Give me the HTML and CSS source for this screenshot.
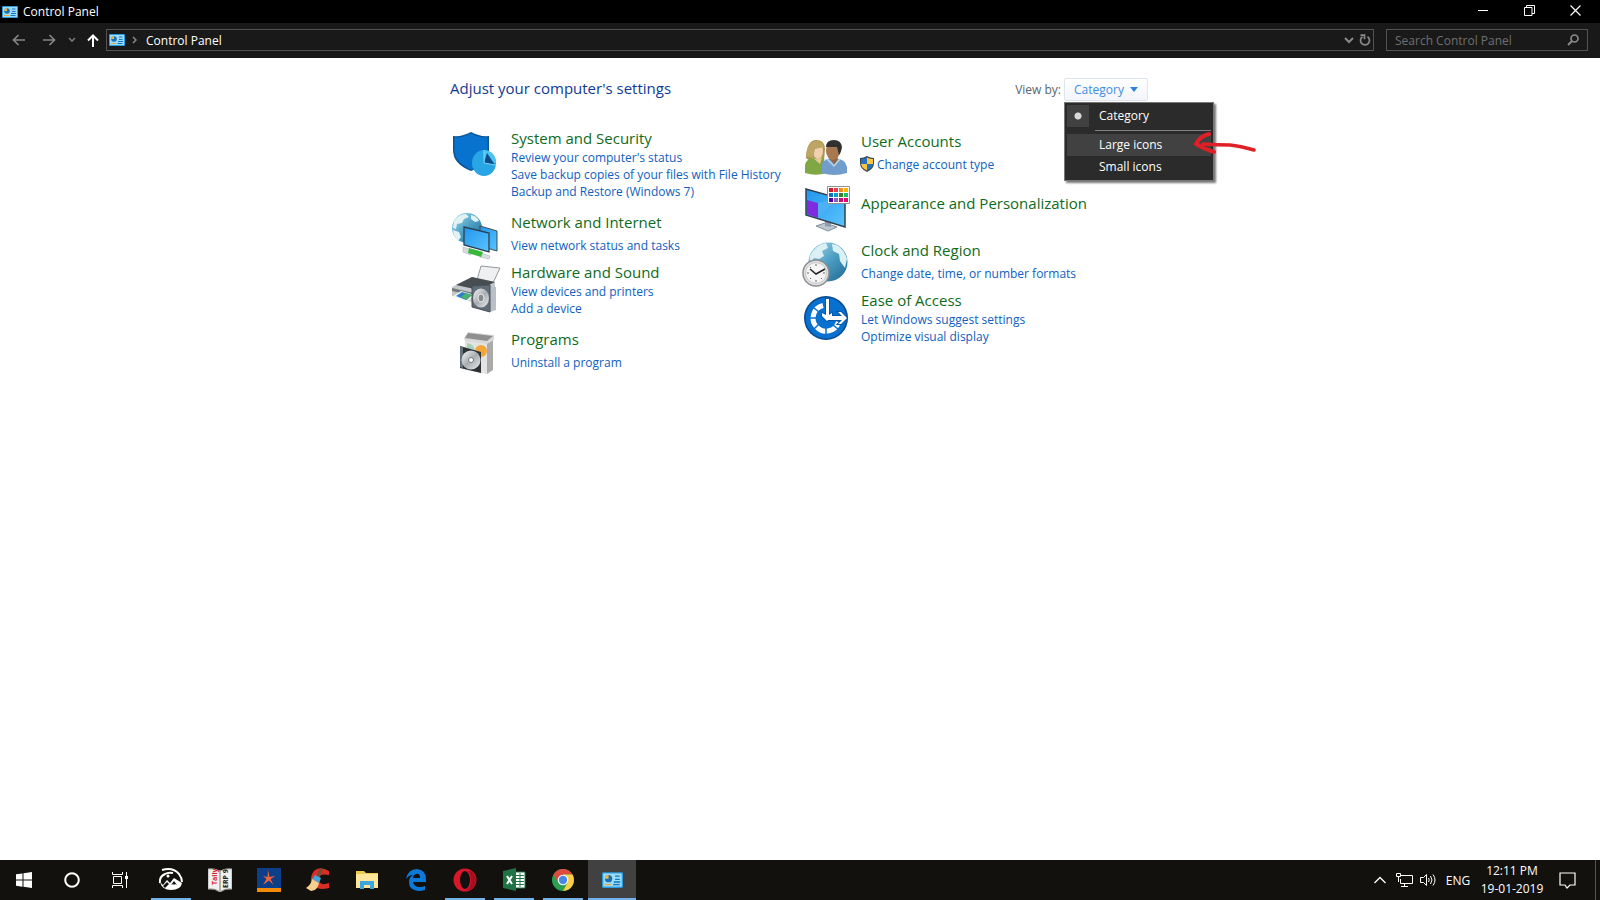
FILE: index.html
```html
<!DOCTYPE html>
<html lang="en">
  <head>
    <meta charset="UTF-8" />
    <meta name="viewport" content="width=device-width, initial-scale=1.0" />
    <title>Control Panel</title>
    <link rel="stylesheet" href="styles.css" />
  </head>
  <body>
    <!-- shared icons -->
    <svg class="defs" aria-hidden="true">
      <defs>
        <symbol id="cp" viewBox="0 0 16 12">
          <rect width="16" height="12" rx="1" fill="#2b9be0" />
          <rect x="1" y="1" width="14" height="10" fill="#9bdcfb" />
          <circle cx="5" cy="5" r="2.8" fill="#1a6fb5" />
          <path d="M5 5V2.200a2.800 2.800 0 0 0-2.800 2.800z" fill="#f6b53c" />
          <path d="M10 3h3.500M10 5.500h3.500M9 7.500h5" stroke="#1673bd" />
          <path d="M2 9.500h5" stroke="#e9a93a" />
          <path d="M8.500 9.500h5" stroke="#1673bd" />
        </symbol>
        <linearGradient id="globe" x1="0" y1="0" x2="1" y2="1">
          <stop offset="0" stop-color="#a9dcec" />
          <stop offset=".5" stop-color="#4d9fc4" />
          <stop offset="1" stop-color="#1d668f" />
        </linearGradient>
        <linearGradient id="screen" x1="0" y1="0" x2="1" y2="1">
          <stop offset="0" stop-color="#2196ee" />
          <stop offset="1" stop-color="#5cc4fc" />
        </linearGradient>
        <linearGradient id="metal" x1="0" y1="0" x2="1" y2="1">
          <stop offset="0" stop-color="#f8f8f8" />
          <stop offset=".5" stop-color="#a9adb1" />
          <stop offset="1" stop-color="#ececec" />
        </linearGradient>
      </defs>
    </svg>

    <div class="window">
      <header class="titlebar">
        <svg class="cp-icon"><use href="#cp" /></svg>
        <span class="title">Control Panel</span>
        <div class="window-buttons">
          <button type="button" aria-label="Minimize">
            <svg width="11" height="11"><path d="M0 5.500h10" stroke="#fff" /></svg>
          </button>
          <button type="button" aria-label="Restore">
            <svg width="11" height="11" fill="none" stroke="#fff"><path d="M.5 2.500h7.500v8H.5zM2.500 2.500v-2h8v8H8" /></svg>
          </button>
          <button type="button" aria-label="Close">
            <svg width="11" height="11"><path d="M.5.5l10 10m0-10l-10 10" stroke="#fff" stroke-width="1.200" /></svg>
          </button>
        </div>
      </header>

      <nav class="navbar">
        <button type="button" class="nav-btn" aria-label="Back">
          <svg width="14" height="12" fill="none" stroke="#858585" stroke-width="1.700"><path d="M13 6H1.500M6.500 1l-5 5 5 5" /></svg>
        </button>
        <button type="button" class="nav-btn" aria-label="Forward">
          <svg width="14" height="12" fill="none" stroke="#858585" stroke-width="1.700"><path d="M1 6h11.500M7.500 1l5 5-5 5" /></svg>
        </button>
        <button type="button" class="nav-btn small" aria-label="Recent locations">
          <svg width="8" height="6" fill="none" stroke="#777" stroke-width="1.700"><path d="M1 1l3 3 3-3" /></svg>
        </button>
        <button type="button" class="nav-btn up" aria-label="Up">
          <svg width="12" height="13" fill="none" stroke="#fff" stroke-width="2"><path d="M6 13V2M1 6.500l5-5 5 5" /></svg>
        </button>
        <div class="address">
          <svg class="cp-icon"><use href="#cp" /></svg>
          <svg class="crumb" width="5" height="8" fill="none" stroke="#8a8a8a" stroke-width="1.500"><path d="M1 1l3 3-3 3" /></svg>
          <a href="#">Control Panel</a>
          <button type="button" aria-label="Previous locations">
            <svg width="10" height="7" fill="none" stroke="#8a8a8a" stroke-width="2"><path d="M1 1l4 4 4-4" /></svg>
          </button>
          <button type="button" aria-label="Refresh">
            <svg width="12" height="12" fill="none" stroke="#8a8a8a" stroke-width="1.700"><path d="M3.500 2.700A4.500 4.500 0 1 0 8.500 2.700M1.500 1.200h4v4" /></svg>
          </button>
        </div>
        <form class="search">
          <input type="text" placeholder="Search Control Panel" aria-label="Search Control Panel" />
          <button type="submit" aria-label="Search">
            <svg width="12" height="12" fill="none" stroke="#8a8a8a"><circle cx="7.500" cy="4.500" r="3.500" stroke-width="1.700" /><path d="M5 7L1 11" stroke-width="2" /></svg>
          </button>
        </form>
      </nav>

      <main class="content">
        <div class="content-head">
          <h1>Adjust your computer's settings</h1>
          <div class="view-by">
            <span id="view-label">View by:</span>
            <div class="dropdown">
              <button type="button" class="dropdown-btn" aria-haspopup="menu" aria-expanded="true" aria-labelledby="view-label">
                Category
                <svg width="8" height="5"><path d="M0 0h8L4 5z" fill="#2c83dc" /></svg>
              </button>
              <div class="menu" role="menu">
                <button type="button" role="menuitemradio" aria-checked="true"><span class="mark"></span>Category</button>
                <hr />
                <button type="button" role="menuitemradio" aria-checked="false" class="hovered">Large icons</button>
                <button type="button" role="menuitemradio" aria-checked="false">Small icons</button>
                <svg class="pointer" width="62" height="24" fill="none" stroke="#e01f27" stroke-linecap="round" stroke-linejoin="round">
                  <path d="M15 2Q6 4 2 12q8 5 18 8" stroke-width="4" />
                  <path d="M9 12q14 1 27 1 10 1 24 5" stroke-width="3.500" />
                </svg>
              </div>
            </div>
          </div>
        </div>

        <div class="columns">
          <div class="column">
            <section class="item">
              <svg viewBox="0 0 48 48">
                <path d="M2 8Q11 9 20 4q9 5 18 4v14q0 14-18 21Q2 36 2 22z" fill="#0b5595" />
                <path d="M3.500 9.500Q12 10 20 5.500q8 4.500 16.500 4V22q0 12-16.500 19.500Q3.500 34 3.500 22z" fill="#0873ce" />
                <ellipse cx="33" cy="35" rx="12" ry="13" fill="#27a5e4" />
                <path d="M33 35V22a12 13 0 0 1 12 13z" fill="#4cc4f2" />
                <path d="M33 35l3-10 8 12z" fill="#0a4c8c" />
                <path d="M33 22v13l12 2" fill="none" stroke="#7cd8f7" />
              </svg>
              <div class="text">
                <h2><a href="#">System and Security</a></h2>
                <a href="#">Review your computer's status</a>
                <a href="#">Save backup copies of your files with File History</a>
                <a href="#">Backup and Restore (Windows 7)</a>
              </div>
            </section>
            <section class="item single">
              <svg viewBox="0 0 48 48">
                <circle cx="16" cy="16" r="15" fill="url(#globe)" />
                <path d="M3 9q5-7 12-7l3 3-5 2-2 4-5 1-1 5-3-1zM20 3q6 1 8 6l-4 1-4-3zM2 18l6 2 2 5-3 4Q2 24 2 18z" fill="#e1f2f5" />
                <path d="M29 14l17 5v20l-17-5z" fill="url(#screen)" stroke="#3d4b56" />
                <path d="M12 35l9 3-1 5-8-3zM30 41l9 3-1 3-9-2z" fill="#d7dcdd" stroke="#a2adb0" stroke-width=".5" />
                <path d="M18 36l14 4-2 5-13-4z" fill="#38b83c" />
                <path d="M13 15l25 6v19l-25-7z" fill="url(#screen)" stroke="#2a4256" stroke-width="1.300" />
              </svg>
              <div class="text">
                <h2><a href="#">Network and Internet</a></h2>
                <a href="#">View network status and tasks</a>
              </div>
            </section>
            <section class="item">
              <svg viewBox="0 0 48 48">
                <path d="M30 4l19 2-8 17-15-5z" fill="#eef0f1" stroke="#969a9d" />
                <path d="M1 25l20-10 23 5v11L24 41 1 34z" fill="#c5c9cc" />
                <path d="M5 23l16-8 23 5-16 8z" fill="#484d52" />
                <path d="M1 26l22 5v3L1 29zM2 34l12 4 9-2" fill="#73787c" />
                <path d="M1 35l9-6 14 4-8 7z" fill="#f4f7f8" />
                <path d="M5 34l6-4 10 3-6 5z" fill="#2e7fca" />
                <path d="M10 35l5-4 6 2-5 5z" fill="#4bb070" />
                <path d="M39 24l6 1v23l-6 2z" fill="#b9bfc5" />
                <path d="M21 24l18-1v27l-18-5z" fill="#626c77" stroke="#48515a" />
                <ellipse cx="30" cy="36" rx="8" ry="9.500" fill="url(#metal)" />
                <ellipse cx="30" cy="36" rx="3" ry="4" fill="#838a90" stroke="#eee" />
              </svg>
              <div class="text">
                <h2><a href="#">Hardware and Sound</a></h2>
                <a href="#">View devices and printers</a>
                <a href="#">Add a device</a>
              </div>
            </section>
            <section class="item single">
              <svg viewBox="0 0 48 48">
                <path d="M14 9l22 3v33l-22-4z" fill="#e4e4e4" />
                <path d="M36 12l6-3v32l-6 4z" fill="#aaa" />
                <path d="M13 9l4-6 26 3v5l-7 4-22-3z" fill="#d8d8d8" />
                <path d="M14 9l3-5 25 3-6 5z" fill="#8f8f8f" />
                <circle cx="30" cy="22" r="6" fill="#f5a638" />
                <path d="M16 14q8 1 8 9l-8-1z" fill="#a8d2b8" />
                <path d="M9 17l21 6v21L9 39z" fill="#2d3237" />
                <path d="M9 17l3 1v21l-3-1z" fill="#66717b" />
                <circle cx="20" cy="31" r="9.500" fill="url(#metal)" />
                <circle cx="20" cy="31" r="2.500" fill="#fff" stroke="#777" />
              </svg>
              <div class="text">
                <h2><a href="#">Programs</a></h2>
                <a href="#">Uninstall a program</a>
              </div>
            </section>
          </div>

          <div class="column right">
            <section class="item single">
              <svg viewBox="0 0 48 48">
                <path d="M5 27Q6 9 15 9t9 9l-1 12H9z" fill="#a99450" />
                <path d="M4 42V35q0-7 9-8l8-1 7 15q-11 5-24 1z" fill="#7fa844" />
                <ellipse cx="17" cy="20" rx="5" ry="8" fill="#f2cfad" />
                <path d="M5 25q1-16 12-15 6 1 6 6l-9 2-2 9z" fill="#bda564" />
                <path d="M12 27q6 3 9-1l-2 7z" fill="#eec5a0" />
                <path d="M21 42v-9q2-6 12-6 12 1 13 9v6q-13 4-25 0z" fill="#719dcc" />
                <path d="M28 27h9l-3 7z" fill="#946541" />
                <ellipse cx="32" cy="20" rx="7" ry="9" fill="#a87850" />
                <path d="M25 16q0-7 8-7 7 0 8 7-1 6-3 8l-2-8z" fill="#30302f" />
                <path d="M26 28l7 7 6-7" fill="none" stroke="#bad5ef" stroke-width="1.500" />
              </svg>
              <div class="text">
                <h2><a href="#">User Accounts</a></h2>
                <a href="#" class="shielded">
                  <svg class="uac" viewBox="0 0 14 16">
                    <path d="M7 0q3 2 7 2v5q0 6-7 9-7-3-7-9V2q4 0 7-2z" fill="#3c4650" />
                    <path d="M7 1.500V8H1V3q3 0 6-1.500zM7 8h6q-1 4.500-6 6.500z" fill="#2672be" />
                    <path d="M7 1.500V8h6V3q-3 0-6-1.500zM7 8H1q1 4.500 6 6.500z" fill="#fbc642" />
                  </svg>
                  Change account type
                </a>
              </div>
            </section>
            <section class="item bare">
              <svg viewBox="0 0 48 48">
                <path d="M15 43l9-3 12 4-9 4z" fill="#bdc7cf" stroke="#84919c" />
                <path d="M24 36h6v8l-6-1z" fill="#8d9dab" />
                <path d="M5 6l39 11v27L5 32z" fill="url(#screen)" stroke="#33424e" stroke-width="1.500" />
                <path d="M6 17l11 3v15L6 31z" fill="#7f2be0" />
                <path d="M17 20l20-4-20 19z" fill="#4cb1f6" />
                <path d="M26.500 3.500h22v17h-22z" fill="#fff" stroke="#909090" />
                <path d="M28 5h4v4h-4z" fill="#d21a2d" /><path d="M33 5h4v4h-4z" fill="#ed3d42" /><path d="M38 5h4v4h-4z" fill="#f08a24" /><path d="M43 5h4v4h-4z" fill="#fbb500" />
                <path d="M28 10h4v4h-4z" fill="#1670bd" /><path d="M33 10h4v4h-4z" fill="#079fc3" /><path d="M38 10h4v4h-4z" fill="#3a812b" /><path d="M43 10h4v4h-4z" fill="#19bd6a" />
                <path d="M28 15h4v4h-4z" fill="#5200a5" /><path d="M33 15h4v4h-4z" fill="#8760ba" /><path d="M38 15h4v4h-4z" fill="#c71283" /><path d="M43 15h4v4h-4z" fill="#e30b67" />
              </svg>
              <div class="text">
                <h2><a href="#">Appearance and Personalization</a></h2>
              </div>
            </section>
            <section class="item single">
              <svg viewBox="0 0 48 48">
                <circle cx="27" cy="22" r="19.500" fill="url(#globe)" />
                <path d="M9 16Q14 5 25 3l2 5-6 3 2 5-5 3-5-1-4 6zM31 4q11 1 15 15l-2 9-5-7-1-7-6-3z" fill="#daf0f4" />
                <circle cx="15" cy="33" r="13" fill="#e2e4e6" stroke="#8b8d90" stroke-width="1.500" />
                <circle cx="15" cy="33" r="10.500" fill="#f5f5f5" stroke="#c1c3c5" />
                <path d="M15 24v2M15 40v2M6 33h2M22 33h2M9 27l1 1M21 39l-1-1M9 39l1-1" stroke="#666" />
                <path d="M9 29l6 5 9-5" fill="none" stroke="#222" stroke-width="1.500" />
              </svg>
              <div class="text">
                <h2><a href="#">Clock and Region</a></h2>
                <a href="#">Change date, time, or number formats</a>
              </div>
            </section>
            <section class="item">
              <svg viewBox="0 0 48 48">
                <circle cx="25" cy="28" r="22" fill="#06498d" />
                <circle cx="25" cy="28" r="20.500" fill="#0870ce" />
                <path d="M22 15.500A13 13 0 1 0 37.500 32" fill="none" stroke="#fff" stroke-width="5" />
                <path d="M9 28h6M13 39l5-5M25 44v-7M13 18l5 4M37 39l-5-4" stroke="#0870ce" stroke-width="1.500" />
                <path d="M25 9h3v16l3-2v3l-5 5-5-5v-3l4 2zM31 26h10l-4-4h3l6 6-6 6h-3l4-4H27z" fill="#fff" stroke="#0658a8" stroke-width="2" paint-order="stroke" />
              </svg>
              <div class="text">
                <h2><a href="#">Ease of Access</a></h2>
                <a href="#">Let Windows suggest settings</a>
                <a href="#">Optimize visual display</a>
              </div>
            </section>
          </div>
        </div>
      </main>
    </div>

    <footer class="taskbar">
      <button type="button" aria-label="Start">
        <svg width="16" height="16" fill="#fff"><path d="M0 2.300l6.500-.9v6.200H0zM7.500 1.200L16 0v7.600H7.500zM0 8.500h6.500v6.200L0 13.800zM7.500 8.500H16V16l-8.500-1.200z" /></svg>
      </button>
      <button type="button" aria-label="Cortana">
        <svg width="16" height="16"><circle cx="8" cy="8" r="6.800" fill="none" stroke="#fff" stroke-width="2" /></svg>
      </button>
      <button type="button" aria-label="Task View">
        <svg width="16" height="16" fill="none" stroke="#fff"><path d="M.5 0v2.500h10V0M.5 16v-2.500h10V16M1.500 4.500h8v7h-8zM14.500 0v16" /><path d="M13 4h3v3h-3z" fill="#fff" stroke="none" /></svg>
      </button>
      <div class="apps">
        <button type="button" class="running" aria-label="Gallery">
          <svg width="24" height="24">
            <path d="M3 2Q14-1 20 6q3 4 3 8" fill="none" stroke="#fff" stroke-width="2" />
            <path d="M1 15Q0 9 6 6q3-2 8-1" fill="none" stroke="#fff" stroke-width="2" />
            <path d="M1 14l3 3 4-5 3 3 4-5 8 5q-1 7-11 7-9 0-11-8z" fill="#fff" />
            <circle cx="9" cy="8" r="1.500" fill="#fff" />
            <path d="M4 18l4-4 2 2-4 4zM12 17l3-4 3 4-2-1-1 1-1-1z" fill="#111" />
          </svg>
        </button>
        <button type="button" aria-label="Tally">
          <svg width="24" height="24">
            <path d="M0 1q6-1 12 2 6-3 12-2v20q-7-1-12 3Q7 20 0 21z" fill="#f1f1ef" stroke="#aaa" />
            <path d="M12 3v20" stroke="#777" />
            <text class="tally" transform="translate(9 17) rotate(-90)" fill="#d5202d">Tally</text>
            <text class="tally" transform="translate(20 20) rotate(-90)" fill="#222">ERP 9</text>
          </svg>
        </button>
        <button type="button" aria-label="Star">
          <svg width="24" height="24">
            <path d="M0 0h24v20H0z" fill="#0c3f87" /><path d="M0 20h24v4H0z" fill="#f28b08" />
            <path d="M11 2l1.500 7 6-1-5 3 3 6-4.500-4.500L6 17l3.500-6L6 8l4.500 1z" fill="#f0653c" />
          </svg>
        </button>
        <button type="button" aria-label="CCleaner">
          <svg width="24" height="24">
            <path d="M23 7V3q-8-5-14-1-6 6-3 14 4 7 17 4v-5q-8 3-10-2-2-8 10-6z" fill="#d92e26" />
            <path d="M14 0l3 1-4 10-3-1z" fill="#704d34" /><path d="M9 7l6 3-2 5-7-4z" fill="#46a4df" />
            <path d="M6 11l7 4q-1 7-8 8l-5-3q5-3 6-9z" fill="#f4d18c" />
          </svg>
        </button>
        <button type="button" aria-label="File Explorer">
          <svg width="22" height="20">
            <path d="M0 1h8l2 2h12v15H0z" fill="#f0c84e" /><path d="M0 4h22v14H0z" fill="#ffe69a" />
            <path d="M4 19v-8h14v8h-4v-4H8v4z" fill="#3ba7dc" />
          </svg>
        </button>
        <button type="button" aria-label="Edge">
          <svg width="22" height="24">
            <path d="M1 11Q3 1 12 1q9 1 9 10v3H8q1 5 7 5 3 0 5-1v4q-3 1-7 1-9-1-9-9 0-5 4-7-4 0-7 4zM8 10h7q0-5-4-4-3 1-3 4z" fill="#0c79d8" />
          </svg>
        </button>
        <button type="button" class="running" aria-label="Opera">
          <svg width="24" height="24">
            <circle cx="12" cy="12" r="11.500" fill="#d81828" /><path d="M18 3q9 7 2 17-3 3-8 3 6-2 6-11 0-6-3-9z" fill="#a70f20" />
            <ellipse cx="12" cy="12" rx="5" ry="9" fill="#111" />
          </svg>
        </button>
        <button type="button" class="running" aria-label="Excel">
          <svg width="24" height="24">
            <path d="M12 4h11v16H12z" fill="#fff" stroke="#237447" />
            <path d="M13 7.500h9M13 10.500h9M13 13.500h9M13 16.500h9M18 5v14" stroke="#237447" />
            <path d="M1 3l13-3v23L1 20z" fill="#217346" />
            <path d="M5 8l5 8m0-8l-5 8" stroke="#fff" stroke-width="2" />
          </svg>
        </button>
        <button type="button" class="running" aria-label="Chrome">
          <svg width="24" height="24">
            <circle cx="12" cy="12" r="11" fill="#2c9e52" />
            <path d="M2.500 6.500A11 11 0 0 1 21.500 6.500H12L7.300 15z" fill="#df4b3e" />
            <path d="M21.500 6.500A11 11 0 0 1 12 23l4.700-8.500L12 6.500z" fill="#fbce43" />
            <circle cx="12" cy="12" r="5.300" fill="#fff" /><circle cx="12" cy="12" r="4.200" fill="#4a88e7" />
          </svg>
        </button>
        <button type="button" class="running active" aria-label="Control Panel">
          <svg width="21" height="16"><use href="#cp" /></svg>
        </button>
      </div>

      <div class="tray">
        <button type="button" aria-label="Show hidden icons">
          <svg width="12" height="8" fill="none" stroke="#fff" stroke-width="1.300"><path d="M.5 7L6 1.500 11.500 7" /></svg>
        </button>
        <button type="button" aria-label="Network">
          <svg width="17" height="14" fill="none" stroke="#fff"><path d="M5 2.500h11.500v8h-12V6M8.500 10.500v3M5 13.500h7M.5.5h4v3h-4zM2.500 4v5" /></svg>
        </button>
        <button type="button" aria-label="Volume">
          <svg width="17" height="14" fill="none" stroke="#fff"><path d="M.5 4.500h3l3-3v11l-3-3h-3zM8.500 5q1.500 2 0 4M10.500 3q3 4 0 8M13 1.500q4 5.500 0 11" /></svg>
        </button>
        <button type="button" class="lang">ENG</button>
        <button type="button" class="clock"><span>12:11 PM</span><span>19-01-2019</span></button>
        <button type="button" class="action" aria-label="Action Center">
          <svg width="17" height="17" fill="none" stroke="#fff" stroke-width="1.200"><path d="M1 1h15v12h-5l-3 3-2-3H1z" /></svg>
        </button>
        <button type="button" class="show-desktop" aria-label="Show desktop"></button>
      </div>
    </footer>
  </body>
</html>
```
FILE: styles.css
```css
* {
  box-sizing: border-box;
}
body {
  margin: 0;
  height: 100vh;
  display: flex;
  flex-direction: column;
  background-color: #fff;
  font-family: "Segoe UI", "Open Sans", sans-serif;
  font-size: 12px;
}
button {
  padding: 0;
  border: none;
  background: none;
  color: inherit;
  font: inherit;
}
a {
  color: #0f60c0;
  text-decoration: none;
}
svg {
  display: block;
  flex-shrink: 0;
}
.defs {
  position: absolute;
  width: 0;
  height: 0;
}
.window {
  flex: 1;
}
.cp-icon {
  width: 16px;
  height: 12px;
}

/* title bar */
.titlebar {
  display: flex;
  align-items: center;
  height: 23px;
  padding-left: 2px;
  background-color: #000;
  color: #fff;
}
.title {
  margin-left: 5px;
}
.window-buttons {
  display: flex;
  height: 20px;
  margin: 0 2px 3px auto;
}
.window-buttons button {
  width: 46px;
  display: flex;
  justify-content: center;
  align-items: center;
}

/* address bar */
.navbar {
  display: flex;
  align-items: center;
  height: 35px;
  padding: 0 12px 1px 4px;
  background-color: #191919;
}
.nav-btn {
  width: 30px;
  height: 22px;
  display: flex;
  justify-content: center;
  align-items: center;
}
.nav-btn.small {
  width: 16px;
}
.nav-btn.up {
  width: 26px;
}
.address {
  flex: 1;
  display: flex;
  align-items: center;
  height: 22px;
  padding-left: 2px;
  border: 1px solid #535353;
}
.address a {
  flex: 1;
  color: #fff;
}
.address button {
  width: 16px;
  display: flex;
  justify-content: center;
}
.crumb {
  margin: 0 9px 0 7px;
}
.search {
  display: flex;
  align-items: center;
  width: 202px;
  height: 22px;
  margin-left: 12px;
  padding: 0 8px;
  border: 1px solid #535353;
}
.search input {
  flex: 1;
  min-width: 0;
  padding: 0;
  border: none;
  outline: none;
  background: none;
  color: #fff;
  font: inherit;
}
.search input::placeholder {
  color: #707070;
}

/* content */
.content {
  max-width: 700px;
  margin: 0 auto;
  padding-top: 20px;
}
.content-head {
  display: flex;
  justify-content: space-between;
  height: 50px;
}
h1 {
  margin: 0;
  color: #123a94;
  font-size: 15px;
  font-weight: normal;
  line-height: 20px;
}
.view-by {
  display: flex;
  gap: 3px;
  height: 24px;
  padding-right: 2px;
  color: #5a6472;
  line-height: 24px;
}
.dropdown {
  position: relative;
}
.dropdown-btn {
  display: flex;
  justify-content: center;
  align-items: center;
  gap: 6px;
  width: 84px;
  height: 23px;
  border: 1px solid #e0e6ee;
  border-radius: 2px;
  background: linear-gradient(#fff, #f2f5fb);
  color: #3d8ee2;
}
.menu {
  position: absolute;
  top: 24px;
  left: 0;
  width: 150px;
  padding: 2px;
  border: 1px solid #777;
  background-color: #2b2b2b;
  box-shadow: 2px 2px 2px #777;
  color: #fff;
  line-height: 22px;
}
.menu button {
  display: block;
  position: relative;
  width: 100%;
  height: 22px;
  padding-left: 32px;
  text-align: left;
}
.menu .hovered {
  background-color: #414141;
}
.menu hr {
  margin: 3px 0 3px 28px;
  border: none;
  border-top: 1px solid #808080;
}
.mark {
  position: absolute;
  left: 0;
  width: 22px;
  height: 22px;
  background: radial-gradient(circle, #dadada 3px, #414141 4px);
}
.pointer {
  position: absolute;
  top: 29px;
  left: 129px;
}
.columns {
  display: grid;
  grid-template-columns: 1fr 1fr;
}
.column.right {
  padding-top: 3px;
}
.item {
  display: flex;
  gap: 12px;
  padding: 0 0 12px 1px;
}
.item > svg {
  width: 48px;
  height: 48px;
  margin-bottom: -8px;
  overflow: visible;
}
.text {
  display: flex;
  flex-direction: column;
  align-items: flex-start;
  line-height: 17px;
}
h2 {
  margin: 0;
  font-size: 15px;
  font-weight: normal;
  line-height: 21px;
}
h2 a {
  color: #0f6b1c;
}
.item.single {
  padding-bottom: 8px;
}
.item.single h2 {
  margin-bottom: 4px;
}
.item.bare {
  padding: 2px 0 17px 1px;
}
.item.bare h2 {
  margin-top: 10px;
}
.shielded {
  display: flex;
  gap: 3px;
}
.uac {
  width: 14px;
  height: 16px;
  margin-left: -1px;
}

/* taskbar */
.taskbar {
  display: flex;
  height: 40px;
  background-color: #12110e;
  color: #fff;
}
.taskbar button {
  display: flex;
  justify-content: center;
  align-items: center;
  width: 48px;
  height: 40px;
}
.apps {
  display: flex;
  gap: 1px;
  margin-left: 3px;
}
.taskbar .running {
  background: linear-gradient(#76b0e8, #76b0e8) center bottom / 40px 2px no-repeat;
}
.taskbar .active {
  background-color: #414141;
  background-size: 48px 2px;
}
.tally {
  font-size: 7px;
  font-weight: bold;
}
.tray {
  display: flex;
  margin-left: auto;
}
.taskbar .tray button {
  width: 24px;
}
.taskbar .tray .lang {
  width: 36px;
}
.taskbar .tray .clock {
  flex-direction: column;
  width: 72px;
  line-height: 18px;
}
.taskbar .tray .action {
  width: 38px;
  margin-right: 9px;
}
.taskbar .tray .show-desktop {
  width: 5px;
  border-left: 1px solid #555;
}
```
